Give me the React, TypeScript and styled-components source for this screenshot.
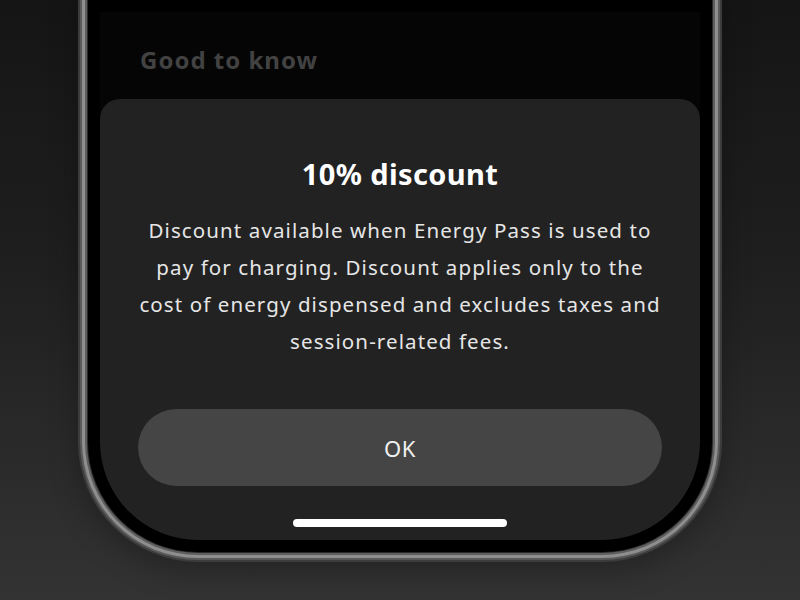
import styled, { createGlobalStyle } from "styled-components";

const GlobalStyle = createGlobalStyle`
  html, body {
    margin: 0;
    padding: 0;
    height: 100%;
  }
  body {
    background: linear-gradient(180deg, #151515 0%, #1f1f1f 45%, #333333 100%);
    font-family: "Noto Sans", "Open Sans", sans-serif;
    overflow: hidden;
  }
`;

const Page = styled.div`
  width: 800px;
  height: 600px;
  display: flex;
  justify-content: center;
  align-items: flex-start;
`;

const Bezel = styled.div`
  width: 624px;
  height: 552px;
  box-sizing: border-box;
  padding: 12px;
  background: #000;
  border-radius: 0 0 110px 110px;
  box-shadow: 0 0 0 1px #2a2a2a, 0 0 0 3px #5e5e5e, 0 0 0 6px #8e8e8e,
    0 0 0 8px #5a5a5a, 0 0 0 10px #3c3c3c, 0 10px 30px 10px rgba(0, 0, 0, 0.25);
`;

const Screen = styled.div`
  height: 100%;
  display: flex;
  flex-direction: column;
  background: #050505;
  border-radius: 0 0 98px 98px;
  overflow: hidden;
`;

const Header = styled.h2`
  margin: 0;
  height: 87px;
  box-sizing: border-box;
  padding: 31px 0 0 40px;
  color: #424242;
  font-size: 24px;
  font-weight: 700;
  letter-spacing: 1px;
  line-height: 34px;
`;

const Sheet = styled.div`
  flex: 1;
  display: flex;
  flex-direction: column;
  align-items: center;
  background: #222222;
  border-radius: 20px 20px 0 0;
  padding: 0 38px;
`;

const Title = styled.h1`
  margin: 55px 0 0;
  color: #ffffff;
  font-size: 29px;
  font-weight: 700;
  letter-spacing: 0.4px;
  line-height: 40px;
`;

const Body = styled.p`
  margin: 18px -5px 0;
  color: #e6e6e6;
  font-size: 20.5px;
  letter-spacing: 1.1px;
  line-height: 37px;
  text-align: center;
`;

const OkButton = styled.button`
  margin-top: 49px;
  width: 100%;
  height: 77px;
  flex-shrink: 0;
  border: none;
  border-radius: 39px;
  background: #454545;
  color: #f0f0f0;
  font-family: inherit;
  font-size: 22px;
  letter-spacing: 0.5px;
  cursor: pointer;
`;

const HomeIndicator = styled.div`
  margin-top: 33px;
  width: 214px;
  height: 8px;
  flex-shrink: 0;
  border-radius: 4px;
  background: #ffffff;
`;

export default function App() {
  return (
    <>
      <GlobalStyle />
      <Page>
        <Bezel>
          <Screen>
            <Header>Good to know</Header>
            <Sheet>
              <Title>10% discount</Title>
              <Body>
                Discount available when Energy Pass is used to pay for charging.
                Discount applies only to the cost of energy dispensed and excludes
                taxes and session-related fees.
              </Body>
              <OkButton>OK</OkButton>
              <HomeIndicator />
            </Sheet>
          </Screen>
        </Bezel>
      </Page>
    </>
  );
}
